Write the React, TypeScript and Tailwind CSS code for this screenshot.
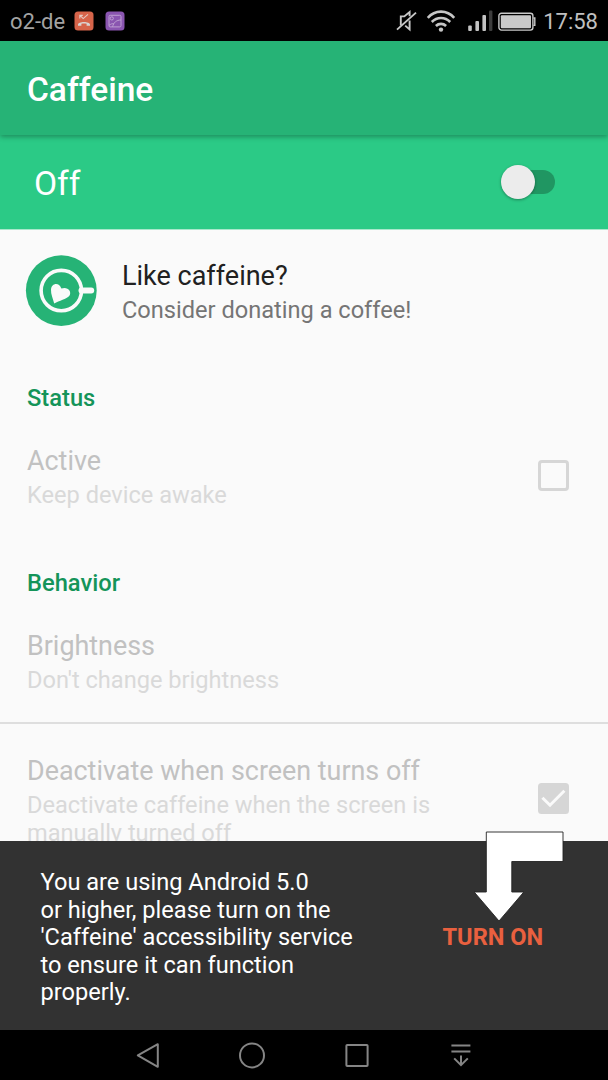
import React from 'react';

const MissedCallBadge: React.FC = () => (
  <svg width="20" height="20" viewBox="0 0 20 20" fill="none">
    <rect x="0.5" y="0.5" width="19" height="19" rx="3.5" fill="#d6644a" />
    <path d="M6 4.4 L9.2 7.6 L14 3.4 M5.8 7.4 V4.4 H8.8" stroke="#e3c9c2" strokeWidth="1.1" />
    <path
      d="M4 13.6 C4 10 16 10 16 13.6 V14.8 H12.6 V12.8 C11 12.3 9 12.3 7.4 12.8 V14.8 H4 Z"
      fill="#d9d3d1"
    />
  </svg>
);

const PictureBadge: React.FC = () => (
  <svg width="20" height="20" viewBox="0 0 20 20" fill="none">
    <rect x="0.5" y="0.5" width="19" height="19" rx="3.5" fill="#8a55b0" />
    <rect x="4" y="4.3" width="12" height="11.6" rx="1.2" stroke="#bd9fd2" />
    <circle cx="6.8" cy="7.4" r="1.6" stroke="#bd9fd2" />
    <path d="M7.6 15.8 C8.4 11.6 11.4 9 16 9 M4 14.4 C6 12.8 7.4 12.4 8.8 12.8" stroke="#bd9fd2" />
  </svg>
);

const MuteIcon: React.FC = () => (
  <svg width="22" height="24" viewBox="0 0 22 24" fill="none" stroke="#c8c8c8" strokeWidth="1.9">
    <path d="M4.8 16.4 V7.4 H8.3 L13.6 3 V7.2 M13.6 11.4 V20.4 L9.2 16.6" />
    <path d="M1 20.6 L20 3.6" />
  </svg>
);

const WifiIcon: React.FC = () => (
  <svg width="30" height="24" viewBox="0 0 30 24" fill="none" stroke="#c6c6c6" strokeWidth="2.6">
    <path d="M1.8 8.8 C9 0.6 21 0.6 28.2 8.8" />
    <path d="M5.8 13 C11 7.6 19 7.6 24.2 13" />
    <path d="M9.9 17 C12.8 14.2 17.2 14.2 20.1 17" />
    <circle cx="15" cy="20.6" r="2.2" fill="#c6c6c6" stroke="none" />
  </svg>
);

const SignalIcon: React.FC = () => (
  <svg width="25" height="22" viewBox="0 0 25 22" fill="#c3c3c3">
    <rect x="0.2" y="15.4" width="3.6" height="5.6" rx="1" />
    <rect x="7.4" y="11" width="3.6" height="10" rx="1" />
    <rect x="14.4" y="5" width="3.6" height="16" rx="1" />
    <rect x="21" y="0.4" width="3.4" height="20.6" rx="1" fill="#3d3d3d" />
  </svg>
);

const BatteryIcon: React.FC = () => (
  <svg width="38" height="20" viewBox="0 0 38 20" fill="none">
    <rect x="0.9" y="1.3" width="34" height="16.8" rx="2.5" stroke="#c9c9c9" strokeWidth="1.4" />
    <rect x="2.8" y="3.2" width="30.2" height="13" rx="1" fill="#c9c9c9" />
    <path d="M35.4 6 H36.8 V13.4 H35.4" stroke="#c9c9c9" strokeWidth="1.4" />
  </svg>
);

const CoffeeLogo: React.FC = () => (
  <svg width="72" height="72" viewBox="0 0 72 72" fill="none">
    <circle cx="36.3" cy="35.6" r="35.4" fill="#26b376" />
    <circle cx="36.3" cy="35.6" r="20.2" stroke="#fafafa" strokeWidth="3.6" />
    <path d="M56.5 35.6 H66.2" stroke="#fafafa" strokeWidth="6" strokeLinecap="round" />
    <path
      d="M29.2 48.6 C28 43.6 25.8 39.6 26 34.8 C26.3 28.4 33.8 26.6 36.4 33.6 C42 31 47.6 36.2 44.2 41 C41.6 44.2 34.2 45.4 29.2 48.6 Z"
      fill="#fafafa"
    />
  </svg>
);

const StatusBar: React.FC = () => (
  <div className="flex h-[41px] shrink-0 items-center bg-black pl-[10px] pr-[10px] text-[#a3a3a3]">
    <span className="w-[64px] whitespace-nowrap pt-px text-[22px] leading-[41px]">o2-de</span>
    <div className="flex gap-[11px]">
      <MissedCallBadge />
      <PictureBadge />
    </div>
    <div className="ml-auto flex items-center">
      <MuteIcon />
      <div className="ml-[8px]"><WifiIcon /></div>
      <div className="ml-[12px]"><SignalIcon /></div>
      <div className="ml-[5px] pt-[2px]"><BatteryIcon /></div>
      <span className="ml-[7px] whitespace-nowrap pt-px text-[22px] leading-[41px] text-[#c0c0c0]">17:58</span>
    </div>
  </div>
);

type CategoryProps = { title: string };

const Category: React.FC<CategoryProps> = ({ title }) => (
  <h2 className="h-[64px] shrink-0 pl-[27px] pt-[33px] text-[23.7px] font-medium leading-[28px] text-[#149459]">
    {title}
  </h2>
);

type RowProps = {
  title: string;
  summary: string;
  children?: React.ReactNode;
};

const DisabledRow: React.FC<RowProps> = ({ title, summary, children }) => (
  <div className="flex h-[121px] shrink-0 pl-[27px] pr-[39px] pt-[30px]">
    <div className="w-[440px]">
      <div className="whitespace-nowrap text-[26.9px] leading-[32px] text-[#c1c1c1]">{title}</div>
      <div className="mt-[5px] text-[23.6px] leading-[27.6px] text-[#d9d9d9]">{summary}</div>
    </div>
    <div className="ml-auto mt-[14px]">{children}</div>
  </div>
);

const App: React.FC = () => {

return (

    <div className="flex h-[1080px] w-[608px] flex-col overflow-hidden bg-[#fafafa] font-[Roboto,sans-serif]">
      <StatusBar />

      <header className="relative z-10 flex h-[94px] shrink-0 items-center bg-[#26b376] pl-[27px] shadow-[0_2px_5px_rgba(0,0,0,0.3)]">
        <h1 className="pt-[3px] text-[33.5px] font-medium leading-[40px] text-white">Caffeine</h1>
      </header>

      <div className="flex h-[94px] shrink-0 items-center justify-between bg-[#2bca86] pl-[34px] pr-[53px]">
        <span className="pt-[3px] text-[33.6px] leading-[40px] text-white">Off</span>
        <div className="flex h-[24px] w-[46px] items-center rounded-full bg-[#209662]">
          <div className="-ml-[8px] h-[34px] w-[34px] shrink-0 rounded-full bg-[#ececec] shadow-[0_1px_3px_rgba(0,0,0,0.35)]" />
        </div>
      </div>
      <div className="h-px shrink-0 bg-[#a9e8cc]" />

      <main className="flex h-[611px] shrink-0 flex-col overflow-hidden">
        <div className="flex h-[121px] shrink-0 pl-[25px]">
          <div className="pt-[25px]"><CoffeeLogo /></div>
          <div className="ml-[25px] pt-[30px]">
            <div className="text-[27px] leading-[32px] text-[#212121]">Like caffeine?</div>
            <div className="mt-[5px] text-[23.6px] leading-[27.6px] text-[#757575]">Consider donating a coffee!</div>
          </div>
        </div>

        <Category title="Status" />
        <DisabledRow title="Active" summary="Keep device awake">
          <div className="mt-[1px] h-[31px] w-[31px] rounded-[4px] border-[3.4px] border-[#d6d6d6]" />
        </DisabledRow>

        <Category title="Behavior" />
        <DisabledRow title="Brightness" summary="Don't change brightness" />
        <div className="mt-[1px] h-[2px] shrink-0 bg-[#dedede]" />
        <div className="shrink-0 pt-px">
          <DisabledRow
            title="Deactivate when screen turns off"
            summary="Deactivate caffeine when the screen is manually turned off"
          >
            <svg className="mt-[14px]" width="31" height="31" viewBox="0 0 31 31" fill="none">
              <rect width="31" height="31" rx="3.5" fill="#d6d6d6" />
              <path d="M4.4 14.8 L12 22.2 L26.4 7.8" stroke="#fafafa" strokeWidth="3" />
            </svg>
          </DisabledRow>
        </div>
      </main>

      <div className="relative flex h-[189px] shrink-0 bg-[#323232] pl-[40.5px] pt-[28px]">
        <p className="w-[340px] text-[23.6px] leading-[27.6px] text-white">
          You are using Android 5.0<br />
          or higher, please turn on the<br />
          'Caffeine' accessibility service<br />
          to ensure it can function<br />
          properly.
        </p>
        <button className="ml-[62px] mt-[54px] h-[28px] whitespace-nowrap text-[23.6px] font-bold leading-[28px] text-[#e9603f]">
          TURN ON
        </button>
        {/* pointer over the action button */}
        <svg className="absolute -top-[10px] left-[473px]" width="92" height="92" viewBox="0 0 92 92">
          <path
            d="M13.3 1 H90 V30.5 H38.8 V61 H50.8 L26 90 L1.2 61 H13.3 Z"
            fill="#fff"
            stroke="#222"
            strokeWidth="0.9"
          />
        </svg>
      </div>

      <nav className="flex h-[50px] shrink-0 items-center bg-black pl-[96px] pr-[95px]">
        <div className="grid w-full grid-cols-4 justify-items-center">
          <svg width="26" height="28" viewBox="0 0 26 28" fill="none" stroke="#858585" strokeWidth="2" strokeLinejoin="round">
            <path d="M22.8 3.2 V25.8 L2.8 14.4 Z" />
          </svg>
          <svg width="28" height="28" viewBox="0 0 28 28" fill="none" stroke="#858585" strokeWidth="2">
            <circle cx="14" cy="14.4" r="12" />
          </svg>
          <svg width="28" height="28" viewBox="0 0 28 28" fill="none" stroke="#858585" strokeWidth="2">
            <rect x="3.4" y="3.9" width="21.2" height="21.2" rx="0.8" />
          </svg>
          <svg width="28" height="28" viewBox="0 0 28 28" fill="none" stroke="#858585" strokeWidth="2">
            <path d="M4.4 4.6 H23.4 M4.4 10.4 H23.4 M14 14.6 V24 M7.2 17.4 L14 24.2 L20.8 17.4" />
          </svg>
        </div>
      </nav>
    </div>

)

}

export default App;
